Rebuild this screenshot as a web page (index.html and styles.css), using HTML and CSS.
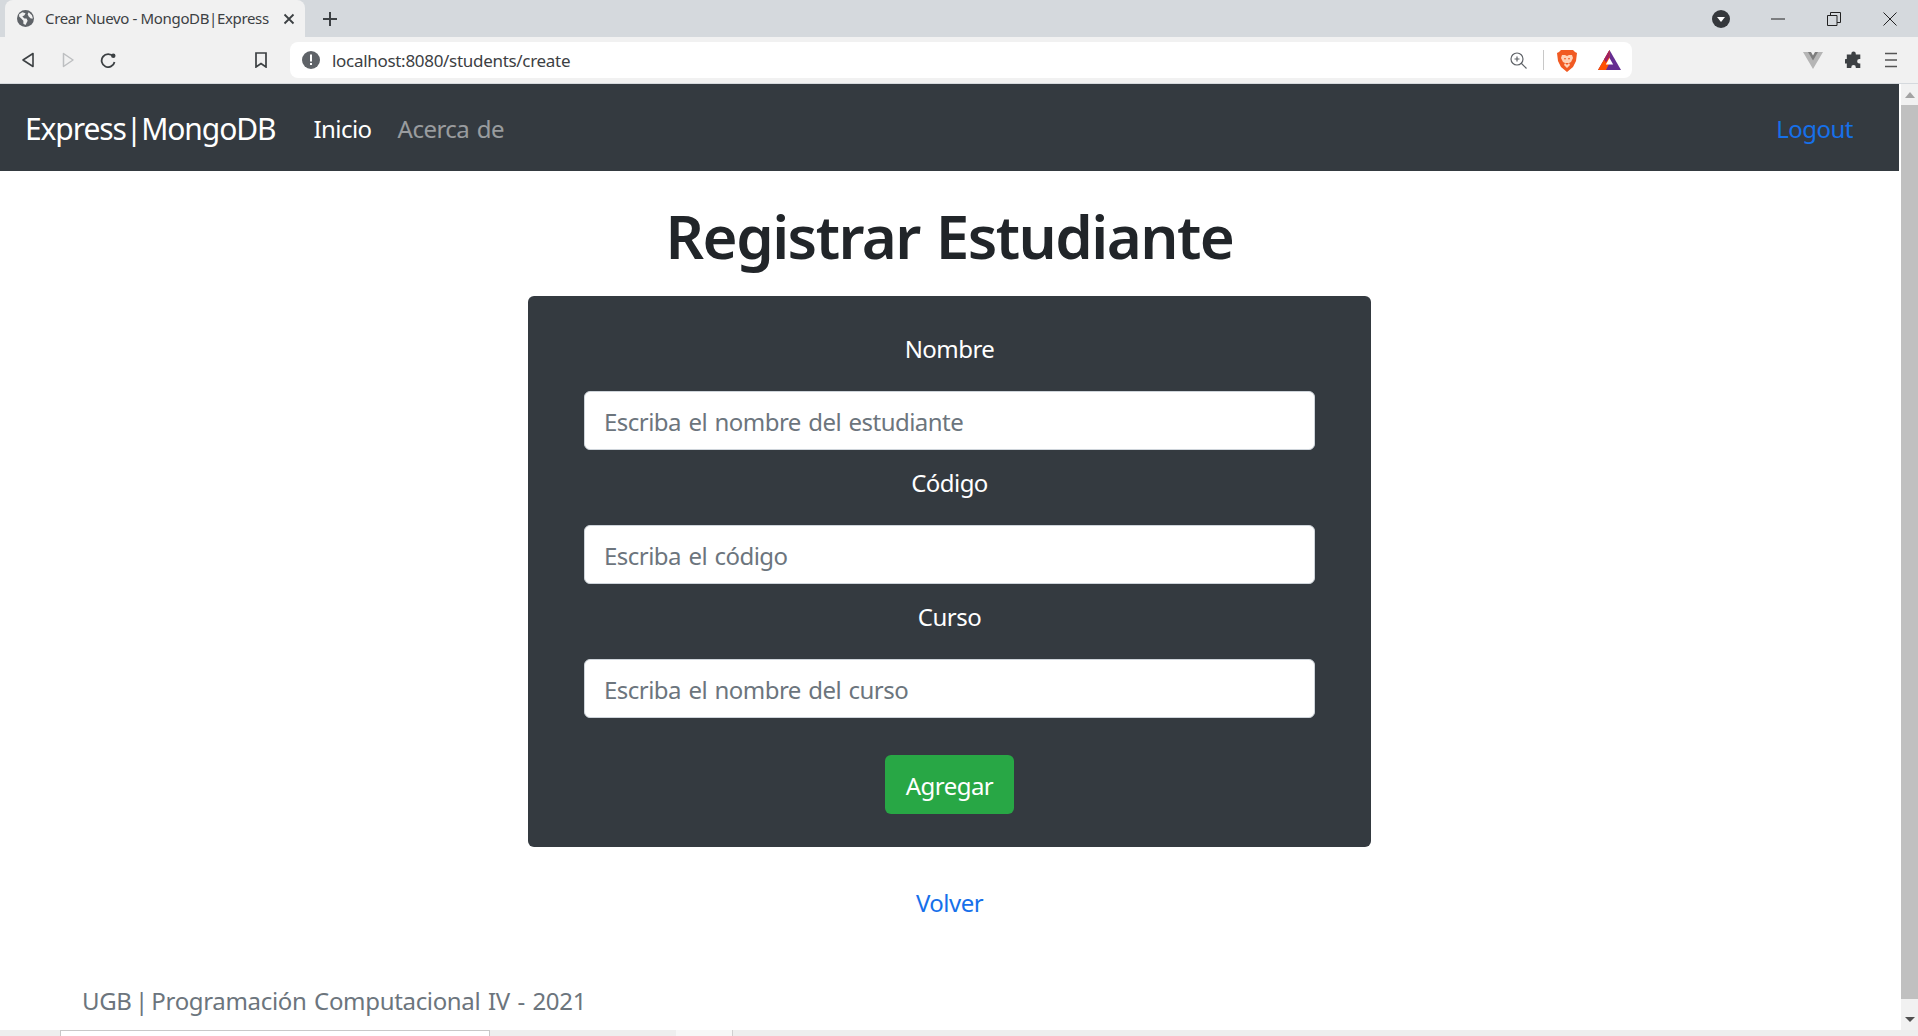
FILE: index.html
```html
<!DOCTYPE html>
<html lang="es">
<head>
<meta charset="utf-8">
<title>Crear Nuevo - MongoDB|Express</title>
<link rel="stylesheet" href="styles.css">
</head>
<body>
<div class="tabstrip">
  <div class="tab">
    <svg class="ic16" viewBox="0 0 16 16"><circle cx="8" cy="8" r="8" fill="#5f6368"/><path d="M2 4l3-2 3 1-1 2-2 1 2 2 2 0 1 2-2 4-2-1 0-3-2-2-2-2z M11 2l3 3 1 3-2 0-2-2-1-2z" fill="#f1f1f1"/></svg>
    <span class="tab-title">Crear Nuevo - MongoDB|Express</span>
    <svg class="ic12" viewBox="0 0 12 12"><path d="M1.500 1.500l9 9M10.500 1.500l-9 9" stroke="#3c4043" stroke-width="1.800" fill="none"/></svg>
  </div>
  <svg class="newtab" viewBox="0 0 16 16"><path d="M8 1v14M1 8h14" stroke="#3c4043" stroke-width="2" fill="none"/></svg>
  <div class="strip-right">
    <svg class="tabsearch" viewBox="0 0 18 18"><circle cx="9" cy="9" r="9" fill="#35383c"/><path d="M5 7h8l-4 5z" fill="#fff"/></svg>
    <svg class="win" viewBox="0 0 14 14"><path d="M0 7h14" stroke="#222" stroke-width="1" fill="none"/></svg>
    <svg class="win" viewBox="0 0 14 14"><path d="M.5 3.500h9.500v10h-9.500z M3.500 3.500v-3h10v10h-3.500" stroke="#222" stroke-width="1" fill="none"/></svg>
    <svg class="win last" viewBox="0 0 14 14"><path d="M.5.500l13 13M13.500.500l-13 13" stroke="#222" stroke-width="1" fill="none"/></svg>
  </div>
</div>
<div class="toolbar">
  <svg class="nav-ic" viewBox="0 0 16 16"><path d="M13 1.500v13L3 8z" stroke="#3c4043" stroke-width="1.600" fill="none" stroke-linejoin="round"/></svg>
  <svg class="nav-ic" viewBox="0 0 16 16"><path d="M3.500 1.500v13L13 8z" stroke="#bdbfc1" stroke-width="1.500" fill="none" stroke-linejoin="round"/></svg>
  <svg class="nav-ic" viewBox="0 0 16 16"><path d="M13.200 4.500A6.500 6.500 0 1 0 14.500 10" stroke="#3c4043" stroke-width="1.800" fill="none"/><circle cx="13.300" cy="3.800" r="2.200" fill="#3c4043"/></svg>
  <svg class="bookmark" viewBox="0 0 14 16"><path d="M2 1h10v14l-5-3.500L2 15z" stroke="#3c4043" stroke-width="1.700" fill="none"/></svg>
  <div class="omnibox">
    <svg class="ic18" viewBox="0 0 18 18"><circle cx="9" cy="9" r="9" fill="#5f6368"/><path d="M8 3.500h2v7H8zM8 12h2v2H8z" fill="#fff"/></svg>
    <span class="url">localhost:8080/students/create</span>
    <svg class="zoomic" viewBox="0 0 17 17"><circle cx="7" cy="7" r="6" stroke="#5f6368" stroke-width="1.200" fill="none"/><path d="M11 11l5.500 5.500M4.500 7h5M7 4.500v5" stroke="#5f6368" stroke-width="1.200" fill="none"/></svg>
    <span class="omni-sep"></span>
    <svg class="brave" viewBox="0 0 20 23"><path d="M4 1h12l2 2 2 1-1 8-3 6-6 5-6-5-3-6-1-8 2-1z" fill="#f15a22"/><path d="M5 6h3l2 1 2-1h3l1 3-2 4-2 1 1 2-3 3-3-3 1-2-2-1-2-4z" fill="#ffd2b8"/><path d="M7 9h2l-1 2zM11 9h2l-1 2zM8 14h4l-2 2z" fill="#f15a22"/></svg>
    <svg class="bat" viewBox="0 0 23 20"><path d="M11.500 0L23 20H0z" fill="#662d91"/><path d="M11.500 0L0 20h8l3.500-7z" fill="#ff5000"/><path d="M11.500 0L6 9.500l2 3 3.500-6z" fill="#9e1f63"/><path d="M11.500 8L7.800 14.500h7.400z" fill="#fff"/></svg>
  </div>
  <svg class="vue" viewBox="0 0 20 17"><path d="M0 0h7l3 5 3-5h7L10 17z" fill="#b5b5b5"/><path d="M5 0h3l2 3.500L12 0h3l-5 8.500z" fill="#7d7d7d"/></svg>
  <svg class="puzzle" viewBox="0 0 20 20"><path d="M7 3a2.500 2.500 0 0 1 5 0v1h5v5h-1a2.500 2.500 0 0 0 0 5h1v5h-5v-1a2.500 2.500 0 0 0-5 0v1H2v-5H1a2.500 2.500 0 0 1 0-5h1V4h5z" fill="#3c4043"/></svg>
  <svg class="menu" viewBox="0 0 12 16"><path d="M0 1.500h12M0 8h12M0 14.500h12" stroke="#555" stroke-width="1.700" fill="none"/></svg>
</div>
<div class="viewport">
  <div class="page">
    <nav class="navbar">
      <a class="brand" href="#">Express|MongoDB</a>
      <a class="nav-link active" href="#">Inicio</a>
      <a class="nav-link" href="#">Acerca de</a>
      <a class="logout" href="#">Logout</a>
    </nav>
    <main class="content">
      <h1 class="title">Registrar Estudiante</h1>
      <form class="card">
        <label class="lbl first">Nombre</label>
        <input class="field" type="text" placeholder="Escriba el nombre del estudiante">
        <label class="lbl">Código</label>
        <input class="field" type="text" placeholder="Escriba el código">
        <label class="lbl">Curso</label>
        <input class="field" type="text" placeholder="Escriba el nombre del curso">
        <button class="btn" type="button">Agregar</button>
      </form>
      <a class="back" href="#">Volver</a>
    </main>
    <footer class="foot"><span class="foot-lead">UGB | </span>Programación Computacional IV - 2021</footer>
  </div>
  <div class="scrollbar">
    <div class="arrow-up"></div>
    <div class="thumb"></div>
    <div class="arrow-down"></div>
  </div>
</div>
<div class="hscroll">
  <div class="hbox"></div>
  <div class="hgap"></div>
  <div class="hlight"></div>
</div>
</body>
</html>
```
FILE: styles.css
```css
* { box-sizing: border-box; }
html, body { margin: 0; height: 100%; overflow: hidden; }
body {
  display: flex;
  flex-direction: column;
  background: #fff;
  font-family: "Noto Sans", "Open Sans", sans-serif;
  color: #212529;
  letter-spacing: -0.53px;
  word-spacing: 1.7px;
}
.tabstrip {
  height: 37px;
  flex: none;
  display: flex;
  align-items: center;
  background: #d5d9dd;
}
.tab {
  width: 300px;
  height: 37px;
  margin-left: 5px;
  padding: 0 10px 0 12px;
  display: flex;
  align-items: center;
  background: #f1f1f1;
  border-radius: 8px 8px 0 0;
}
.ic16 { width: 17px; height: 17px; flex: none; }
.ic12 { width: 12px; height: 12px; flex: none; margin-left: auto; }
.tab-title {
  margin-left: 11px;
  padding-bottom: 2px;
  font-size: 15px;
  letter-spacing: -0.35px;
  word-spacing: 0;
  color: #3c4043;
  white-space: nowrap;
}
.newtab { width: 16px; height: 16px; margin-left: 17px; }
.strip-right { margin-left: auto; display: flex; align-items: center; }
.tabsearch { width: 18px; height: 18px; margin-right: 41px; }
.win { width: 14px; height: 14px; margin-right: 42px; }
.win.last { margin-right: 21px; }
.toolbar {
  height: 47px;
  flex: none;
  display: flex;
  align-items: center;
  background: #f1f1f1;
  border-bottom: 1px solid #d5d9dd;
  padding-left: 20px;
}
.nav-ic { width: 16px; height: 16px; margin-right: 24px; }
.bookmark { width: 14px; height: 16px; margin-left: 114px; margin-right: 16px; flex: none; }
.omnibox {
  width: 1342px;
  height: 36px;
  margin-left: 6px;
  background: #fff;
  border-radius: 8px;
  display: flex;
  align-items: center;
  padding-left: 12px;
}
.ic18 { width: 18px; height: 18px; flex: none; }
.url {
  margin-left: 12px;
  padding-top: 1px;
  font-size: 17px;
  letter-spacing: -0.3px;
  color: #3c4043;
}
.zoomic { width: 17px; height: 17px; margin-left: auto; }
.omni-sep { width: 1px; height: 20px; background: #c8c8c8; margin-left: 16px; }
.brave { width: 20px; height: 23px; margin-left: 13px; }
.bat { width: 23px; height: 20px; margin-left: 21px; margin-right: 11px; }
.vue { width: 20px; height: 17px; margin-left: 171px; }
.puzzle { width: 18px; height: 18px; margin-left: 22px; }
.menu { width: 12px; height: 16px; margin-left: 22px; }
.viewport { flex: 1; min-height: 0; display: flex; }
.page { flex: 1; min-width: 0; display: flex; flex-direction: column; }
.navbar {
  height: 87px;
  flex: none;
  background: #343a40;
  display: flex;
  align-items: center;
  padding: 2px 46px 0 25px;
}
.brand { color: #fff; font-size: 30px; letter-spacing: -1.1px; text-decoration: none; margin-right: 38px; }
.nav-link { color: rgba(255,255,255,.5); font-size: 24px; text-decoration: none; margin-right: 26px; }
.nav-link.active { color: #fff; }
.logout { color: #1670ea; font-size: 24px; text-decoration: none; margin-left: auto; }
.content { display: flex; flex-direction: column; align-items: center; }
.title { margin: 29px 0 0; font-size: 60px; line-height: 72px; font-weight: 600; letter-spacing: -1.55px; word-spacing: 2px; }
.card {
  width: 843px;
  height: 551px;
  margin-top: 24px;
  padding: 0 56px;
  background: #343a40;
  border-radius: 6px;
  display: flex;
  flex-direction: column;
  align-items: center;
}
.lbl { height: 75px; color: #fff; font-size: 24px; line-height: 33px; padding-top: 16px; }
.lbl.first { height: 95px; padding-top: 36px; }
.field {
  width: 100%;
  height: 59px;
  flex: none;
  padding: 2px 19px 0;
  border: 1px solid #ced4da;
  border-radius: 6px;
  font: inherit;
  font-size: 24px;
  letter-spacing: -0.53px;
  word-spacing: 1.7px;
  background: #fff;
}
.field::placeholder { color: #6c757d; opacity: 1; }
.btn {
  width: 129px;
  height: 59px;
  margin-top: 37px;
  padding: 1px 0 0;
  background: #28a745;
  color: #fff;
  border: 0;
  border-radius: 6px;
  font: inherit;
  font-size: 24px;
  letter-spacing: -0.53px;
}
.back { margin-top: 38px; color: #1670ea; font-size: 24px; text-decoration: none; line-height: 36px; }
.foot { margin-top: auto; padding: 0 0 11px 82px; color: #6c757d; font-size: 24px; letter-spacing: -0.33px; line-height: 36px; }
.foot-lead { word-spacing: -2.500px; }
.scrollbar {
  width: 19px;
  flex: none;
  background: #f1f1f1;
  display: flex;
  flex-direction: column;
  align-items: center;
  border-left: 2px solid #fff;
}
.arrow-up { margin-top: 8px; border: 5px solid transparent; border-bottom: 6px solid #a3a3a3; border-top: 0; }
.thumb { width: 100%; height: 894px; margin-top: 7px; background: #c0c0c0; flex: none; }
.arrow-down { margin-top: auto; margin-bottom: 8px; border: 5px solid transparent; border-top: 5px solid #505050; border-bottom: 0; }
.hscroll { height: 6px; flex: none; display: flex; background: #eeeeee; }
.hbox { width: 430px; margin-left: 60px; background: #fff; border: 1px solid #c8c8c8; border-bottom: 0; }
.hgap { width: 186px; }
.hlight { width: 57px; background: #f7f7f7; border-right: 1px solid #d0d0d0; }
```
